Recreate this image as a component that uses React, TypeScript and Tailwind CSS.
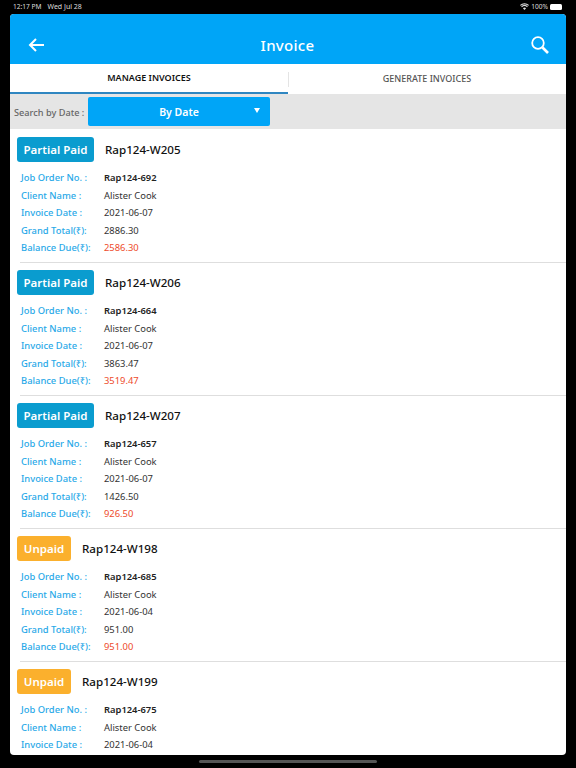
interface Invoice {
  status: 'Partial Paid' | 'Unpaid';
  invoiceNo: string;
  jobOrder: string;
  date: string;
  total?: string;
  balance?: string;
}

const invoices: Invoice[] = [
  { status: 'Partial Paid', invoiceNo: 'Rap124-W205', jobOrder: 'Rap124-692', date: '2021-06-07', total: '2886.30', balance: '2586.30' },
  { status: 'Partial Paid', invoiceNo: 'Rap124-W206', jobOrder: 'Rap124-664', date: '2021-06-07', total: '3863.47', balance: '3519.47' },
  { status: 'Partial Paid', invoiceNo: 'Rap124-W207', jobOrder: 'Rap124-657', date: '2021-06-07', total: '1426.50', balance: '926.50' },
  { status: 'Unpaid', invoiceNo: 'Rap124-W198', jobOrder: 'Rap124-685', date: '2021-06-04', total: '951.00', balance: '951.00' },
  // the last card runs off the bottom of the panel
  { status: 'Unpaid', invoiceNo: 'Rap124-W199', jobOrder: 'Rap124-675', date: '2021-06-04' },
];

function Row({ label, value, valueClass }: { label: string; value: string; valueClass: string }) {
  return (
    <div className="flex h-[17.5px] items-center text-[9.4px] leading-none">
      <span className="w-[83px] shrink-0 font-medium text-[#29a9e8]">{label}</span>
      <span className={valueClass}>{value}</span>
    </div>
  );
}

function InvoiceCard({ invoice }: { invoice: Invoice }) {
  const partial = invoice.status === 'Partial Paid';
  return (
    <div className="h-[133px] shrink-0 pt-[8px]">
      <div className="flex items-center pl-[7px]">
        <div
          className={`flex h-[25px] items-center justify-center rounded-[3px] text-[11.5px] font-semibold text-white ${
            partial ? 'w-[77px] bg-[#0a9ccf]' : 'w-[54px] bg-[#fbb02d]'
          }`}
        >
          {invoice.status}
        </div>
        <span className="ml-[11px] text-[11.6px] font-medium text-[#111]">{invoice.invoiceNo}</span>
      </div>
      <div className="mt-[7px] pl-[11px]">
        <Row label="Job Order No. :" value={invoice.jobOrder} valueClass="font-semibold text-[#222]" />
        <Row label="Client Name :" value="Alister Cook" valueClass="text-[#333]" />
        <Row label="Invoice Date :" value={invoice.date} valueClass="text-[#333]" />
        {invoice.total && <Row label="Grand Total(₹):" value={invoice.total} valueClass="text-[#333]" />}
        {invoice.balance && <Row label="Balance Due(₹):" value={invoice.balance} valueClass="text-[#ee4b2b]" />}
      </div>
      {invoice.balance && <div className="mt-[5px] ml-[10px] h-px bg-[#dedede]" />}
    </div>
  );
}

export default function App() {
  return (
    <div className="flex h-[768px] w-[576px] flex-col overflow-hidden bg-black font-['Noto_Sans','Open_Sans',sans-serif]">
      {/* status bar */}
      <div className="flex h-[14px] shrink-0 items-center justify-between pl-[13px] pr-[14px] text-[6.6px] text-[#ddd]">
        <div className="flex gap-[6px]">
          <span>12:17 PM</span>
          <span className="text-[7px]">Wed Jul 28</span>
        </div>
        <div className="flex items-center gap-[2px]">
          <svg width="9" height="7" viewBox="0 0 18 14" fill="#ddd">
            <path d="M9 14 5.8 10.4a4.6 4.6 0 0 1 6.4 0L9 14ZM3.9 8.3 2.4 6.6a9.6 9.6 0 0 1 13.2 0l-1.5 1.7a7.4 7.4 0 0 0-10.2 0ZM1.5 5.6 0 4a13 13 0 0 1 18 0l-1.5 1.6a10.8 10.8 0 0 0-15 0Z" />
          </svg>
          <span>100%</span>
          <div className="h-[6px] w-[12px] rounded-[1.5px] bg-white" />
        </div>
      </div>

      {/* app panel */}
      <div className="mx-[10px] flex h-[741px] shrink-0 flex-col overflow-hidden rounded-[4px] bg-white">
        <div className="flex h-[50px] shrink-0 items-center justify-between bg-[#00a5f7] pl-[18px] pr-[17px] pt-[12px] text-white">
          <svg width="16" height="14" viewBox="0 0 16 14" fill="none" stroke="currentColor" strokeWidth="2">
            <path d="M16 7H2M8 1 2 7l6 6" />
          </svg>
          <span className="text-[15px] font-medium tracking-[0.3px]">Invoice</span>
          <svg width="18" height="18" viewBox="0 0 18 18" fill="none" stroke="currentColor">
            <circle cx="7" cy="7" r="5.8" strokeWidth="1.8" />
            <path d="m11.5 11.5 5.5 5.5" strokeWidth="2.6" />
          </svg>
        </div>

        <div className="relative flex h-[30px] shrink-0 text-[9px] font-semibold">
          <div className="flex flex-1 items-center justify-center border-b-2 border-[#2f86c1] text-[#111]">
            MANAGE INVOICES
          </div>
          <div className="flex flex-1 items-center justify-center font-medium text-[#555]">GENERATE INVOICES</div>
          <div className="absolute left-[278px] top-[8px] h-[15px] w-px bg-[#e4e4e4]" />
        </div>

        <div className="flex h-[35px] shrink-0 items-center bg-[#e5e5e5] pl-[4px]">
          <span className="w-[74px] pt-[3px] text-[9.2px] font-medium text-[#666]">Search by Date :</span>
          <div className="relative flex h-[29px] w-[182px] items-center justify-center rounded-[2px] bg-[#00a5f7] pt-[2px] text-[10.5px] font-semibold text-white">
            By Date
            <div className="absolute right-[10px] top-[11px] h-0 w-0 border-x-[3.5px] border-t-[5px] border-x-transparent border-t-white" />
          </div>
        </div>

        <div className="flex min-h-0 flex-1 flex-col overflow-hidden">
          {invoices.map((invoice) => (
            <InvoiceCard key={invoice.invoiceNo} invoice={invoice} />
          ))}
        </div>
      </div>

      {/* home indicator */}
      <div className="mt-[5px] flex justify-center">
        <div className="h-[3px] w-[178px] rounded-full bg-[#555]" />
      </div>
    </div>
  );
}
